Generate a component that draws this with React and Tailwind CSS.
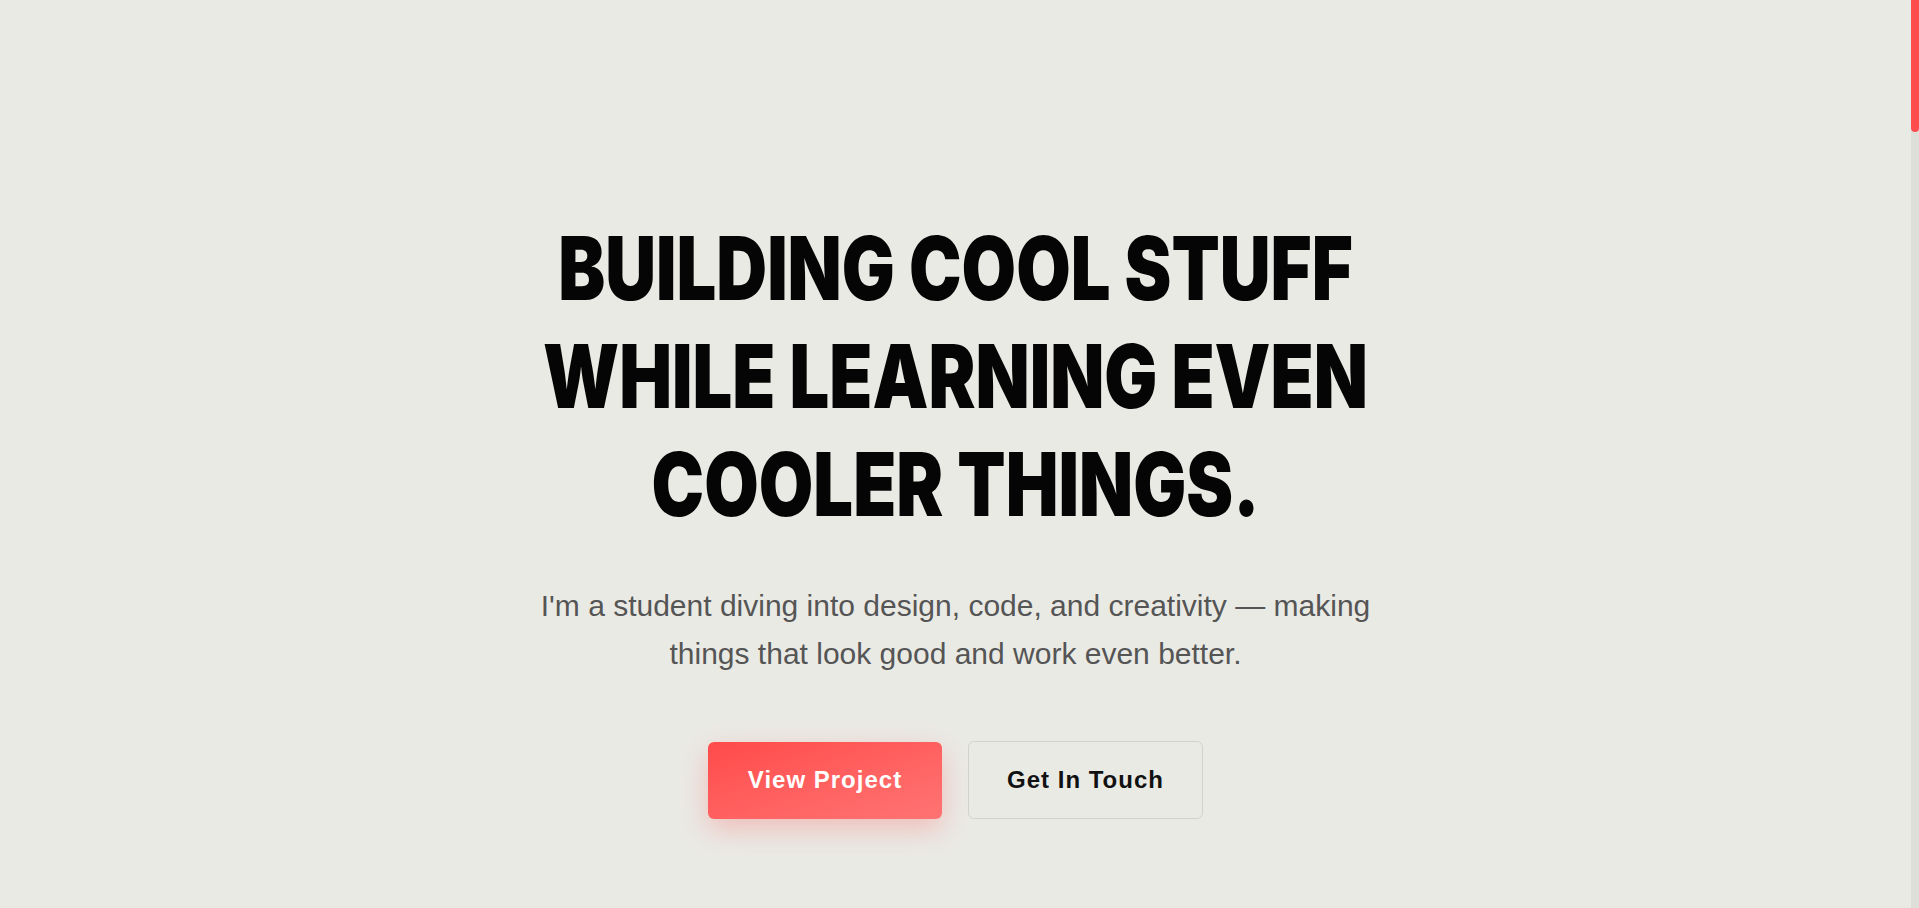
const HEADLINE_FONT = { fontFamily: "Inter, Roboto, sans-serif" };

export default function App() {
  return (
    <div className="flex min-h-screen bg-[#eaeae5] font-['Liberation_Sans',Arial,sans-serif]">
      <main className="flex-1">
        {/* Hero */}
        <section className="flex min-h-[908px] flex-col items-center px-6 pt-[214px]">
          <h1
            className="origin-center scale-x-80 text-center text-[88px] font-black uppercase leading-[108px] text-[#050505]"
            style={HEADLINE_FONT}
          >
            Building cool stuff
            <br />
            while learning even
            <br />
            cooler things.
          </h1>

          <p className="mt-[44px] max-w-[880px] text-center text-[30px] leading-[48px] text-[#555555]">
            I'm a student diving into design, code, and creativity — making
            things that look good and work even better.
          </p>

          <div className="mt-[63px] flex items-center gap-[26px]">
            <a
              href="#projects"
              className="flex h-[77px] w-[234px] items-center justify-center rounded-md bg-gradient-to-br from-[#ff4a4a] to-[#ff7373] text-[24px] font-bold tracking-[1px] text-white shadow-[0_10px_28px_rgba(255,77,77,0.28)]"
            >
              View Project
            </a>
            <a
              href="#contact"
              className="flex h-[78px] w-[235px] items-center justify-center rounded-md border border-[#d3d3ce] text-[24px] font-bold tracking-[1px] text-[#111111]"
            >
              Get In Touch
            </a>
          </div>
        </section>
      </main>

      {/* Page scrollbar */}
      <aside className="w-2 shrink-0 bg-[#dfdfda]">
        <div className="h-[132px] rounded-b-full bg-[#ff4d4d]" />
      </aside>
    </div>
  );
}
